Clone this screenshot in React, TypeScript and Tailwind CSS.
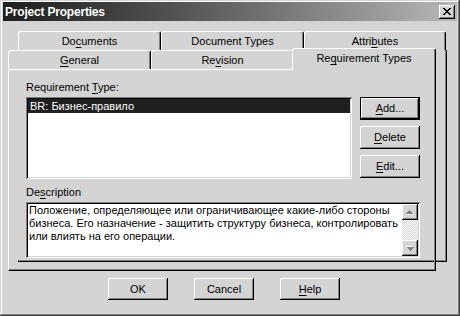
import React from "react";

const raised =
  "shadow-[inset_-1px_-1px_0_#000,inset_1px_1px_0_#fff,inset_-2px_-2px_0_#808080]";
const raisedDefault =
  "shadow-[inset_0_0_0_1px_#000,inset_-2px_-2px_0_#000,inset_2px_2px_0_#fff,inset_-3px_-3px_0_#808080]";
const sunken =
  "shadow-[inset_1px_1px_0_#808080,inset_-1px_-1px_0_#fff,inset_2px_2px_0_#000,inset_-2px_-2px_0_#d4d4d4]";

const U = ({ children }: { children: React.ReactNode }) => (
  <span className="underline underline-offset-[2px]">{children}</span>
);

const Btn = ({
  children,
  isDefault,
  h = "h-[23px]",
}: {
  children: React.ReactNode;
  isDefault?: boolean;
  h?: string;
}) => (
  <div
    className={`w-[60px] ${h} flex items-center justify-center bg-[#d4d4d4] ${
      isDefault ? raisedDefault : raised
    }`}
  >
    {children}
  </div>
);

const BackTab = ({ children, w }: { children: React.ReactNode; w: string }) => (
  <div
    className={`${w} h-[19px] flex items-center justify-center rounded-t-[3px] border-t border-l border-white border-r border-r-black shadow-[inset_-1px_0_0_#808080]`}
  >
    {children}
  </div>
);

const ArrowUp = ({ down }: { down?: boolean }) => (
  <svg width="8" height="5" viewBox="0 0 8 5" shapeRendering="crispEdges" className={down ? "rotate-180" : ""}>
    <path d="M4 1h1v1H4zM3 2h3v1H3zM2 3h5v1H2zM1 4h7v1H1z" fill="#fff" />
    <path d="M3 0h1v1H3zM2 1h3v1H2zM1 2h5v1H1zM0 3h7v1H0z" fill="#808080" />
  </svg>
);

const CloseGlyph = () => (
  <svg width="8" height="7" viewBox="0 0 8 7" shapeRendering="crispEdges">
    <path
      d="M0 0h2v1H0zM6 0h2v1H6zM1 1h2v1H1zM5 1h2v1H5zM2 2h4v1H2zM3 3h2v1H3zM2 4h4v1H2zM1 5h2v1H1zM5 5h2v1H5zM0 6h2v1H0zM6 6h2v1H6z"
      fill="#000"
    />
  </svg>
);

export default function App() {
  return (
    <div className="w-[460px] h-[316px] overflow-hidden bg-[#d4d4d4] text-black text-[11px] font-['Liberation_Sans',Arial,sans-serif] pt-[2px] px-[3px] flex flex-col shadow-[inset_-1px_-1px_0_#404040,inset_1px_1px_0_#d4d4d4,inset_-2px_-2px_0_#808080,inset_2px_2px_0_#fff]">
      {/* title bar */}
      <div className="h-[19px] flex items-center bg-gradient-to-r from-[#1e1e1e] to-[#b8b8b8] pl-[2px]">
        <span className="text-white font-bold text-[12px] tracking-[-0.2px]">Project Properties</span>
        <div className={`ml-auto mr-[2px] w-[16px] h-[14px] bg-[#d4d4d4] flex items-center justify-center ${raised}`}>
          <CloseGlyph />
        </div>
      </div>

      {/* tabs */}
      <div className="mt-[10px] ml-[5px] w-[439px] flex flex-col">
        <div className="flex pl-[10px]">
          <BackTab w="w-[143px]">
            Do<U>c</U>uments
          </BackTab>
          <BackTab w="w-[143px]">Document Types</BackTab>
          <BackTab w="w-[142px]">
            Attri<U>b</U>utes
          </BackTab>
        </div>

        <div className="grid">
          <div className="col-start-1 row-start-1 ml-[10px] mb-[9px] border-r border-b border-black shadow-[inset_-1px_-1px_0_#808080]" />
          <div className="col-start-1 row-start-1 mr-[11px] flex flex-col">
            <div className="h-[19px] flex items-end">
              <div className="w-[143px] h-[19px] flex items-center justify-center rounded-t-[3px] border-t border-l border-white border-r border-r-black shadow-[inset_-1px_0_0_#808080]">
                <U>G</U>eneral
              </div>
              <div className="w-[143px] h-[19px] flex items-center justify-center rounded-t-[3px] border-t border-l border-white border-r border-r-black shadow-[inset_-1px_0_0_#808080]">
                Re<U>v</U>ision
              </div>
              <div className="relative z-10 -ml-[2px] -mb-px w-[144px] h-[22px] bg-[#d4d4d4] flex items-center justify-center pb-[2px] rounded-t-[3px] border-t border-l border-white border-r border-r-black shadow-[inset_-1px_0_0_#808080]">
                Re<U>q</U>uirement Types
              </div>
            </div>

            <div className="h-[202px] border-t border-l border-white border-r border-b border-r-black border-b-black shadow-[inset_-1px_-1px_0_#808080] pl-[17px] pt-[11px]">
              <div className="leading-[13px]">
                Requirement <U>T</U>ype:
              </div>
              <div className="mt-[3px] flex gap-[8px]">
                <div className={`w-[326px] h-[82px] bg-white p-[2px] ${sunken}`}>
                  <div className="h-[14px] bg-[#202020] text-white pl-[2px] leading-[14px]">
                    BR: Бизнес-правило
                  </div>
                </div>
                <div className="flex flex-col gap-[6px]">
                  <Btn isDefault>
                    <span>
                      <U>A</U>dd...
                    </span>
                  </Btn>
                  <Btn>
                    <span>
                      <U>D</U>elete
                    </span>
                  </Btn>
                  <Btn>
                    <span>
                      <U>E</U>dit...
                    </span>
                  </Btn>
                </div>
              </div>
              <div className="mt-[7px] leading-[13px]">
                De<U>s</U>cription
              </div>
              <div className={`mt-[3px] w-[394px] h-[56px] bg-white p-[2px] flex ${sunken}`}>
                <div className="flex-1 overflow-hidden whitespace-nowrap leading-[13px] pl-[1px]">
                  Положение, определяющее или ограничивающее какие-либо стороны
                  <br />
                  бизнеса. Его назначение - защитить структуру бизнеса, контролировать
                  <br />
                  или влиять на его операции.
                </div>
                <div className="w-[16px] flex flex-col">
                  <div className={`h-[16px] bg-[#d4d4d4] flex items-center justify-center ${raised}`}>
                    <ArrowUp />
                  </div>
                  <div className="flex-1 bg-[repeating-conic-gradient(#d4d4d4_0_25%,#ffffff_0_50%)] bg-size-[2px_2px]" />
                  <div className={`h-[16px] bg-[#d4d4d4] flex items-center justify-center ${raised}`}>
                    <ArrowUp down />
                  </div>
                </div>
              </div>
            </div>
          </div>
        </div>
      </div>

      {/* dialog buttons */}
      <div className="mt-[7px] ml-[105px] flex gap-[26px]">
        <Btn h="h-[22px]">OK</Btn>
        <Btn h="h-[22px]">Cancel</Btn>
        <Btn h="h-[22px]">
          <span>
            <U>H</U>elp
          </span>
        </Btn>
      </div>
    </div>
  );
}
